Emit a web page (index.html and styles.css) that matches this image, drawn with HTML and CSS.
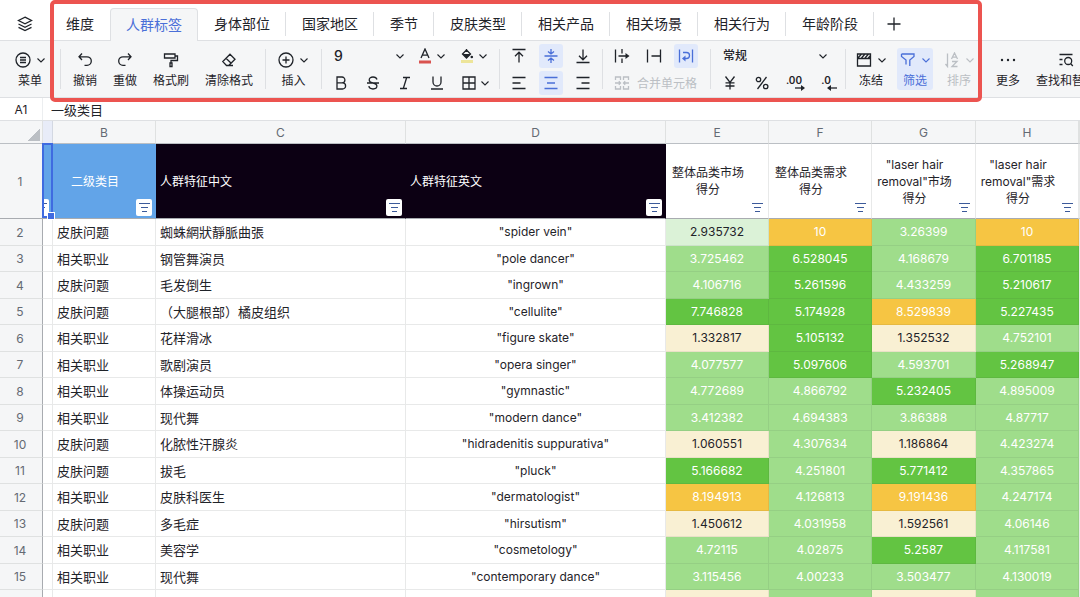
FILE: index.html
```html
<!DOCTYPE html>
<html lang="zh-CN">
<head>
<meta charset="UTF-8" />
<meta name="viewport" content="width=device-width, initial-scale=1.0"/>
<title>人群标签</title>
<link rel="stylesheet" href="styles.css">
</head>
<body>

<!-- 共用图标 -->
<svg class="symbols" aria-hidden="true">
    <symbol id="chevron" viewBox="0 0 10 10"><path d="M1.500 3.500L5 7l3.500-3.500"/></symbol>
    <symbol id="filter-lines" viewBox="0 0 16 17"><path d="M3 4.500h11M5 8.500h7M6 12.500h5"/></symbol>
</svg>

<!-- 工作表标签 -->
<nav class="tab-bar">
    <button class="sheet-list" aria-label="工作表列表">
        <svg class="icon" viewBox="0 0 16 16"><path d="M8 1.200l6.500 3.300L8 7.800 1.500 4.500z"/><path d="M1.500 8L8 11.300 14.500 8M1.500 11.300L8 14.600l6.500-3.300"/></svg>
    </button>
    <ul class="tabs">
        <li><button>维度</button></li>
        <li class="active"><button>人群标签</button></li>
        <li><button>身体部位</button></li>
        <li><button>国家地区</button></li>
        <li><button>季节</button></li>
        <li><button>皮肤类型</button></li>
        <li><button>相关产品</button></li>
        <li><button>相关场景</button></li>
        <li><button>相关行为</button></li>
        <li><button>年龄阶段</button></li>
    </ul>
    <button class="add-tab" aria-label="新建工作表">
        <svg class="icon" viewBox="0 0 16 16"><path d="M8 1.500v13M1.500 8h13"/></svg>
    </button>
</nav>

<!-- 工具栏 -->
<div class="toolbar">
    <div class="group center">
        <button class="tool drop">
            <span class="tool-icon">
                <svg class="icon" viewBox="0 0 16 16"><circle cx="8" cy="8" r="7"/><path d="M5 5.500h6M5 8h6M5 10.500h6"/></svg>
                <svg class="chevron"><use href="#chevron"/></svg>
            </span>
            <span>菜单</span>
        </button>
    </div>

    <div class="group center">
        <button class="tool">
            <span class="tool-icon"><svg class="icon" viewBox="0 0 16 16"><path d="M5 1.500L2 4.800 5 8M2 4.800h8a4.300 4.300 0 0 1 0 8.600H7.500"/></svg></span>
            <span>撤销</span>
        </button>
        <button class="tool">
            <span class="tool-icon"><svg class="icon" viewBox="0 0 16 16"><path d="M11 1.500l3 3.300L11 8M14 4.800H6a4.300 4.300 0 0 0 0 8.600h2.500"/></svg></span>
            <span>重做</span>
        </button>
        <button class="tool">
            <span class="tool-icon"><svg class="icon" viewBox="0 0 16 16"><path d="M1.500 2h10.500v4H1.500zM12 4h2.500v4.500H8v2.500M7 11h2v3.500H7z"/></svg></span>
            <span>格式刷</span>
        </button>
        <button class="tool">
            <span class="tool-icon"><svg class="icon" viewBox="0 0 16 16"><path d="M9 2.200l5 5-6.300 6.300H5.500L1.800 9.600zM5 6.200l5.200 5M5.500 13.500H12"/></svg></span>
            <span>清除格式</span>
        </button>
    </div>

    <div class="group center">
        <button class="tool drop">
            <span class="tool-icon">
                <svg class="icon" viewBox="0 0 16 16"><circle cx="8" cy="8" r="7"/><path d="M8 4.500v7M4.500 8h7"/></svg>
                <svg class="chevron"><use href="#chevron"/></svg>
            </span>
            <span>插入</span>
        </button>
    </div>

    <div class="group stack">
        <div class="row">
            <label class="picker size-picker">
                <select aria-label="字号"><option>9</option></select>
                <svg class="chevron"><use href="#chevron"/></svg>
            </label>
            <button class="cell-drop" aria-label="字体颜色">
                <svg class="icon" viewBox="0 0 16 16"><path d="M4 10L8 1l4 9M5.300 7.200h5.400"/><path class="red-bar" d="M2 14h12"/></svg>
                <svg class="chevron"><use href="#chevron"/></svg>
            </button>
            <button class="cell-drop" aria-label="填充颜色">
                <svg class="icon" viewBox="0 0 16 16"><path d="M7.500 1v3M7.500 2l4 4-4 4-4-4z"/><path class="solid" d="M3.500 6h8l-4 4z"/><circle class="solid" cx="12.800" cy="9" r="1.300"/><path class="yellow-bar" d="M2 13.500h12"/></svg>
                <svg class="chevron"><use href="#chevron"/></svg>
            </button>
        </div>
        <div class="row">
            <button class="cell" aria-label="加粗"><svg class="icon" viewBox="0 0 16 16"><path d="M4 2h5a2.900 2.900 0 0 1 0 5.800H4zM4 7.800h5.500a3.100 3.100 0 0 1 0 6.200H4z"/></svg></button>
            <button class="cell" aria-label="删除线"><svg class="icon" viewBox="0 0 16 16"><path d="M12 4.500C11.500 2.800 10 2 8 2 5.800 2 4.200 3 4.200 4.900 4.200 6.800 6 7.500 8 8c2.300.600 3.900 1.300 3.900 3.100S10.200 14 8 14c-2.300 0-3.800-1-4.200-2.800M2 8h12"/></svg></button>
            <button class="cell" aria-label="斜体"><svg class="icon" viewBox="0 0 16 16"><path d="M6 2.500h7M3 13.500h7M9.700 2.500l-3.400 11"/></svg></button>
            <button class="cell" aria-label="下划线"><svg class="icon" viewBox="0 0 16 16"><path d="M4 1.500v5.500a4 4 0 0 0 8 0V1.500M2 14h12"/></svg></button>
            <button class="cell-drop" aria-label="边框">
                <svg class="icon" viewBox="0 0 16 16"><path d="M2 2h12v12H2zM8 2v12M2 8h12"/></svg>
                <svg class="chevron"><use href="#chevron"/></svg>
            </button>
        </div>
    </div>

    <div class="group stack">
        <div class="row">
            <button class="cell" aria-label="顶部对齐"><svg class="icon" viewBox="0 0 16 16"><path d="M1.500 1.500h13M8 14.500V4.500M4 8.200l4-4 4 4"/></svg></button>
            <button class="cell on" aria-label="垂直居中"><svg class="icon" viewBox="0 0 16 16"><path d="M1.500 8h13M8 1v4.500M5 3.500l3 2.500 3-2.500M8 15v-4.500M5 12.500L8 10l3 2.500"/></svg></button>
            <button class="cell" aria-label="底部对齐"><svg class="icon" viewBox="0 0 16 16"><path d="M1.500 14.500h13M8 1.500v10M4 7.800l4 4 4-4"/></svg></button>
        </div>
        <div class="row">
            <button class="cell" aria-label="左对齐"><svg class="icon" viewBox="0 0 16 16"><path d="M1.500 2.500h13M1.500 8h8M1.500 13.500h13"/></svg></button>
            <button class="cell on" aria-label="水平居中"><svg class="icon" viewBox="0 0 16 16"><path d="M1.500 2.500h13M4 8h8M1.500 13.500h13"/></svg></button>
            <button class="cell" aria-label="右对齐"><svg class="icon" viewBox="0 0 16 16"><path d="M1.500 2.500h13M6.500 8h8M1.500 13.500h13"/></svg></button>
        </div>
    </div>

    <div class="group stack">
        <div class="row">
            <button class="cell" aria-label="溢出"><svg class="icon" viewBox="0 0 16 16"><path d="M1.500 1.500v13M8 1v4.500M8 10.500V15M4.500 8H13"/><path class="solid" d="M11.500 5L15.500 8l-4 3z"/></svg></button>
            <button class="cell" aria-label="截断"><svg class="icon" viewBox="0 0 16 16"><path d="M1.500 1.500v13M14.500 1.500v13M5.500 8h9"/></svg></button>
            <button class="cell on" aria-label="自动换行"><svg class="icon" viewBox="0 0 16 16"><path d="M1.500 1.500v13M14.500 1.500v13M5 4.500h3.500a3 3 0 0 1 0 6H6"/><path class="solid" d="M7.500 7.500v6L4 10.500z"/></svg></button>
        </div>
        <div class="row">
            <button class="merge" disabled>
                <svg class="icon" viewBox="0 0 16 16"><path d="M6.500 5V2h-5v3M1.500 11v3h5v-3M14.500 5V2h-5v3M9.500 11v3h5v-3M1 8h5.500M9.500 8H15M4.800 6.200L6.500 8 4.800 9.800M11.200 6.200L9.500 8l1.700 1.800"/></svg>
                <span>合并单元格</span>
            </button>
        </div>
    </div>

    <div class="group stack">
        <div class="row">
            <label class="picker format-picker">
                <select aria-label="数字格式"><option>常规</option></select>
                <svg class="chevron"><use href="#chevron"/></svg>
            </label>
        </div>
        <div class="row">
            <button class="cell" aria-label="货币"><svg class="icon" viewBox="0 0 16 16"><path d="M3.500 1.500L8 7.500l4.500-6M8 7.500v7M3.500 7.800h9M3.500 11h9"/></svg></button>
            <button class="cell" aria-label="百分比"><svg class="icon" viewBox="0 0 16 16"><path d="M12.500 2l-9 12"/><circle cx="4.500" cy="4.500" r="2.200"/><circle cx="11.700" cy="11.500" r="2.200"/></svg></button>
            <button class="cell decimals" aria-label="增加小数位">
                <span>.00</span>
                <svg viewBox="0 0 12 6"><path d="M1 3h7"/><path class="solid" d="M7 0l4 3-4 3z"/></svg>
            </button>
            <button class="cell decimals" aria-label="减少小数位">
                <span>.0</span>
                <svg viewBox="0 0 12 6"><path d="M4 3h7"/><path class="solid" d="M5 0L1 3l4 3z"/></svg>
            </button>
        </div>
    </div>

    <div class="group last">
        <button class="tool drop">
            <span class="tool-icon">
                <svg class="icon" viewBox="0 0 16 16"><path d="M1.500 2h13v12h-13zM1.500 6.500h13M2 6l3.500-4M5.500 6L9 2M9 6l3.500-4M12 6.500l2.500-3"/></svg>
                <svg class="chevron"><use href="#chevron"/></svg>
            </span>
            <span>冻结</span>
        </button>
        <button class="tool drop on">
            <span class="tool-icon">
                <svg class="icon" viewBox="0 0 16 16"><path d="M1.500 2h12.500v2.500L9.800 8v6M1.500 2v2.500L6 8v4.500"/></svg>
                <svg class="chevron"><use href="#chevron"/></svg>
            </span>
            <span>筛选</span>
        </button>
        <button class="tool drop" disabled>
            <span class="tool-icon">
                <svg class="icon" viewBox="0 0 16 16"><path d="M3.500 1.500v13L1.500 12M7.500 7l3-6 3 6M8.500 5.200h4M8 9.500h5l-5 5h5.500"/></svg>
                <svg class="chevron"><use href="#chevron"/></svg>
            </span>
            <span>排序</span>
        </button>
        <div class="extra">
            <button class="tool">
                <span class="tool-icon"><svg class="icon" viewBox="0 0 16 16"><circle class="dot" cx="2" cy="8" r="1.200"/><circle class="dot" cx="8" cy="8" r="1.200"/><circle class="dot" cx="14" cy="8" r="1.200"/></svg></span>
                <span>更多</span>
            </button>
            <button class="tool">
                <span class="tool-icon"><svg class="icon" viewBox="0 0 16 16"><path d="M1.500 2.500h13M1.500 7.500h3M1.500 12.500h3M12.800 11.800l2 2.200"/><circle cx="10.200" cy="9" r="3.500"/></svg></span>
                <span>查找和替换</span>
            </button>
        </div>
    </div>
</div>

<!-- 编辑栏 -->
<div class="formula-bar">
    <input class="cell-name" aria-label="单元格" value="A1">
    <input class="formula" aria-label="内容" value="一级类目">
</div>

<!-- 表格 -->
<main class="sheet">
<table>
    <colgroup>
        <col class="w-index"><col class="w-a"><col class="w-score"><col class="w-c"><col class="w-d"><col class="w-score"><col class="w-score"><col class="w-g"><col class="w-score"><col>
    </colgroup>
    <thead>
        <tr class="letters">
            <th class="corner"></th><th class="picked"></th><th>B</th><th>C</th><th>D</th><th>E</th><th>F</th><th>G</th><th>H</th><th></th>
        </tr>
        <tr class="titles">
            <th class="index picked">1</th>
            <th class="blue"><span class="clip"><button class="filter" aria-label="筛选 A"><svg><use href="#filter-lines"/></svg></button></span><span class="selection"></span></th>
            <th class="blue">二级类目<button class="filter" aria-label="筛选 B"><svg><use href="#filter-lines"/></svg></button></th>
            <th class="black">人群特征中文<button class="filter" aria-label="筛选 C"><svg><use href="#filter-lines"/></svg></button></th>
            <th class="black">人群特征英文<button class="filter" aria-label="筛选 D"><svg><use href="#filter-lines"/></svg></button></th>
            <th>整体品类市场得分<button class="filter" aria-label="筛选 E"><svg><use href="#filter-lines"/></svg></button></th>
            <th>整体品类需求得分<button class="filter" aria-label="筛选 F"><svg><use href="#filter-lines"/></svg></button></th>
            <th>"laser hair removal"市场得分<button class="filter" aria-label="筛选 G"><svg><use href="#filter-lines"/></svg></button></th>
            <th>"laser hair removal"需求得分<button class="filter" aria-label="筛选 H"><svg><use href="#filter-lines"/></svg></button></th>
            <th></th>
        </tr>
    </thead>
    <tbody>
        <tr><th class="index">2</th><td></td><td>皮肤问题</td><td>蜘蛛網狀靜脈曲張</td><td class="en">"spider vein"</td><td class="pale">2.935732</td><td class="orange">10</td><td class="light">3.26399</td><td class="orange">10</td><td></td></tr>
        <tr><th class="index">3</th><td></td><td>相关职业</td><td>钢管舞演员</td><td class="en">"pole dancer"</td><td class="light">3.725462</td><td class="green">6.528045</td><td class="light">4.168679</td><td class="green">6.701185</td><td></td></tr>
        <tr><th class="index">4</th><td></td><td>皮肤问题</td><td>毛发倒生</td><td class="en">"ingrown"</td><td class="light">4.106716</td><td class="green">5.261596</td><td class="light">4.433259</td><td class="green">5.210617</td><td></td></tr>
        <tr><th class="index">5</th><td></td><td>皮肤问题</td><td>（大腿根部）橘皮组织</td><td class="en">"cellulite"</td><td class="green">7.746828</td><td class="green">5.174928</td><td class="orange">8.529839</td><td class="green">5.227435</td><td></td></tr>
        <tr><th class="index">6</th><td></td><td>相关职业</td><td>花样滑冰</td><td class="en">"figure skate"</td><td class="cream">1.332817</td><td class="green">5.105132</td><td class="cream">1.352532</td><td class="light">4.752101</td><td></td></tr>
        <tr><th class="index">7</th><td></td><td>相关职业</td><td>歌剧演员</td><td class="en">"opera singer"</td><td class="light">4.077577</td><td class="green">5.097606</td><td class="light">4.593701</td><td class="green">5.268947</td><td></td></tr>
        <tr><th class="index">8</th><td></td><td>相关职业</td><td>体操运动员</td><td class="en">"gymnastic"</td><td class="light">4.772689</td><td class="light">4.866792</td><td class="green">5.232405</td><td class="light">4.895009</td><td></td></tr>
        <tr><th class="index">9</th><td></td><td>相关职业</td><td>现代舞</td><td class="en">"modern dance"</td><td class="light">3.412382</td><td class="light">4.694383</td><td class="light">3.86388</td><td class="light">4.87717</td><td></td></tr>
        <tr><th class="index">10</th><td></td><td>皮肤问题</td><td>化脓性汗腺炎</td><td class="en">"hidradenitis suppurativa"</td><td class="cream">1.060551</td><td class="light">4.307634</td><td class="cream">1.186864</td><td class="light">4.423274</td><td></td></tr>
        <tr><th class="index">11</th><td></td><td>皮肤问题</td><td>拔毛</td><td class="en">"pluck"</td><td class="green">5.166682</td><td class="light">4.251801</td><td class="green">5.771412</td><td class="light">4.357865</td><td></td></tr>
        <tr><th class="index">12</th><td></td><td>相关职业</td><td>皮肤科医生</td><td class="en">"dermatologist"</td><td class="orange">8.194913</td><td class="light">4.126813</td><td class="orange">9.191436</td><td class="light">4.247174</td><td></td></tr>
        <tr><th class="index">13</th><td></td><td>皮肤问题</td><td>多毛症</td><td class="en">"hirsutism"</td><td class="cream">1.450612</td><td class="light">4.031958</td><td class="cream">1.592561</td><td class="light">4.06146</td><td></td></tr>
        <tr><th class="index">14</th><td></td><td>相关职业</td><td>美容学</td><td class="en">"cosmetology"</td><td class="light">4.72115</td><td class="light">4.02875</td><td class="green">5.2587</td><td class="light">4.117581</td><td></td></tr>
        <tr><th class="index">15</th><td></td><td>相关职业</td><td>现代舞</td><td class="en">"contemporary dance"</td><td class="light">3.115456</td><td class="light">4.00233</td><td class="light">3.503477</td><td class="light">4.130019</td><td></td></tr>
        <tr><th class="index"></th><td></td><td></td><td></td><td></td><td class="cream"></td><td class="light"></td><td class="cream"></td><td class="light"></td><td></td></tr>
    </tbody>
</table>
</main>

<!-- 红色标注框 -->
<div class="callout"></div>

</body>
</html>
```
FILE: styles.css
```css
* {
    box-sizing: border-box;
}

body {
    margin: 0;
    height: 100vh;
    display: flex;
    flex-direction: column;
    position: relative;
    overflow: hidden;
    font-family: Inter, "Noto Sans CJK SC", sans-serif;
    font-size: 12px;
    color: #1f2329;
    background: #fff;
}

button,
input,
select {
    font: inherit;
    color: inherit;
    background: none;
    border: 0;
    border-radius: 0;
    padding: 0;
    margin: 0;
}

svg {
    display: block;
    fill: none;
    stroke: currentColor;
    stroke-width: 1.3;
}

.symbols {
    position: absolute;
    width: 0;
    height: 0;
}

.icon {
    width: 16px;
    height: 16px;
    flex: none;
}

.chevron {
    width: 10px;
    height: 10px;
    flex: none;
    stroke-width: 1.1;
}

.solid,
.dot {
    fill: currentColor;
    stroke: none;
}

.red-bar {
    stroke: #d9534f;
    stroke-width: 3;
}

.yellow-bar {
    stroke: #ede59a;
    stroke-width: 3;
}

/* 工作表标签 */
.tab-bar {
    flex: none;
    display: flex;
    height: 41px;
    padding-top: 8px;
    border-bottom: 1px solid #dee0e3;
}

.sheet-list {
    width: 50px;
    display: flex;
    align-items: center;
    justify-content: center;
}

.tabs {
    display: flex;
    align-items: center;
    list-style: none;
    margin: 0;
    padding: 0;
    font-size: 14px;
}

.tabs li {
    height: 24px;
    border-right: 1px solid #dee0e3;
}

.tabs li:first-child {
    border-right-color: transparent;
}

.tabs button {
    height: 100%;
    padding: 0 15px 2px 16px;
    white-space: nowrap;
}

.tabs .active {
    height: 33px;
    align-self: flex-start;
    border: 1px solid #dee0e3;
    border-bottom: 0;
    border-radius: 4px 4px 0 0;
    background: #f5f6f7;
    color: #4a6fd8;
}

.tabs .active button {
    padding: 0 15px 2px;
}

.add-tab {
    width: 40px;
    display: flex;
    align-items: center;
    justify-content: center;
}

/* 工具栏 */
.toolbar {
    flex: none;
    display: grid;
    grid-template-columns: 61px 205px 56px 178px 103px 108px 135px 1fr;
    align-items: center;
    height: 57px;
    background: #f5f6f7;
    border-bottom: 1px solid #dee0e3;
    overflow: hidden;
}

.group {
    display: flex;
    align-items: center;
    min-width: 0;
    height: 40px;
    border-right: 1px solid #dee0e3;
}

.center {
    justify-content: center;
}

.stack {
    flex-direction: column;
    align-items: stretch;
    justify-content: center;
    gap: 3px;
    padding-left: 7px;
}

.last {
    gap: 8px;
    padding-left: 7px;
    border-right: 0;
}

.extra {
    display: flex;
    margin-left: 3px;
}

.tool {
    flex: none;
    display: flex;
    flex-direction: column;
    align-items: center;
    padding: 0 8px;
    line-height: 18px;
    white-space: nowrap;
}

.drop {
    width: 36px;
    padding: 0;
}

.tool-icon {
    display: flex;
    align-items: center;
    justify-content: center;
    gap: 5px;
    height: 24px;
}

.on {
    background: #e1e9fb;
    color: #4a6fd8;
    border-radius: 3px;
}

button:disabled {
    color: #bbbfc4;
}

.row {
    display: flex;
    gap: 8px;
}

.cell {
    display: flex;
    align-items: center;
    justify-content: center;
    width: 24px;
    height: 24px;
}

.cell-drop {
    display: flex;
    align-items: center;
    gap: 3px;
    height: 24px;
    padding: 0 1px 0 4px;
}

.picker {
    display: grid;
    align-items: center;
    height: 24px;
}

.picker select,
.picker .chevron {
    grid-area: 1 / 1;
}

.picker select {
    appearance: none;
    padding-left: 5px;
    font-weight: 500;
}

.picker .chevron {
    justify-self: end;
    margin-right: 2px;
    pointer-events: none;
}

.size-picker {
    width: 76px;
    font-size: 14px;
}

.size-picker .chevron {
    margin-right: 0;
}

.format-picker {
    width: 112px;
}

.decimals {
    flex-direction: column;
    font-size: 10px;
    font-weight: 600;
    line-height: 10px;
}

.decimals svg {
    width: 12px;
    height: 6px;
    align-self: flex-end;
}

.merge {
    display: flex;
    align-items: center;
    gap: 7px;
    height: 24px;
    padding-left: 4px;
    white-space: nowrap;
}

/* 编辑栏 */
.formula-bar {
    flex: none;
    display: flex;
    height: 23px;
    border-bottom: 1px solid #dee0e3;
}

.cell-name {
    width: 43px;
    text-align: center;
    border-right: 1px solid #eceef0;
}

.formula {
    flex: 1;
    padding-left: 8px;
    font-size: 13px;
}

/* 表格 */
.sheet {
    flex: 1;
    min-height: 0;
    overflow: hidden;
}

table {
    width: 100%;
    table-layout: fixed;
    border-collapse: separate;
    border-spacing: 0;
}

.w-index {
    width: 43px;
}

.w-a {
    width: 10px;
}

.w-score {
    width: 103px;
}

.w-c {
    width: 250px;
}

.w-d {
    width: 260px;
}

.w-g {
    width: 104px;
}

th,
td {
    padding: 0;
    font-weight: 400;
    border-right: 1px solid rgba(31, 35, 41, 0.1);
    border-bottom: 1px solid rgba(31, 35, 41, 0.1);
}

.letters th {
    height: 23px;
    background: #f5f6f7;
    color: #646a73;
    border-bottom-color: #bbbfc4;
}

.letters .corner {
    background: linear-gradient(135deg, transparent 50%, #bbbfc4 50%) 28px 8px / 12px 12px no-repeat #f5f6f7;
}

.letters .picked,
.titles .picked {
    background: #e8ecf8;
}

.index,
.titles .index {
    background: #f5f6f7;
    color: #646a73;
    border-right-color: #a8abb0;
    padding: 0 2px 0 0;
}

.titles th {
    position: relative;
    height: 75px;
    padding: 0 20px 0 2px;
    line-height: 17px;
    border-bottom-color: #a8abb0;
}

.titles .index {
    padding: 0 2px 0 0;
}

.titles .blue {
    background: #62a4e8;
    color: #fff;
    border-right-color: transparent;
}

.titles .black {
    padding-left: 4px;
    background: #0c0013;
    color: #fff;
    text-align: left;
    border-right-color: transparent;
}

.filter {
    position: absolute;
    right: 3px;
    bottom: 2px;
    width: 16px;
    height: 17px;
    background: #fff;
    border-radius: 2px;
    color: #3c5a9a;
}

.filter svg {
    width: 16px;
    height: 17px;
    stroke-width: 1;
}

/* A 列很窄，只露出按钮的一部分 */
.clip {
    position: absolute;
    inset: 0;
    overflow: hidden;
}

.selection {
    position: absolute;
    inset: -1px -1px 0 -1px;
    border: 2px solid #3f6be0;
}

.selection::after {
    content: "";
    position: absolute;
    right: -4px;
    bottom: -4px;
    width: 6px;
    height: 6px;
    background: #3f6be0;
    border: 1px solid #fff;
}

/* 选区手柄要盖住右侧单元格 */
.titles .blue:has(.selection) {
    z-index: 1;
}

tbody tr {
    height: 26px;
}

tbody tr:nth-child(odd) {
    height: 27px;
}

td {
    padding-left: 4px;
    font-size: 13px;
    line-height: 20px;
    white-space: nowrap;
}

.en,
.pale,
.light,
.green,
.orange,
.cream {
    padding: 0;
    font-size: 12px;
    text-align: center;
}

.pale,
.light,
.green,
.orange,
.cream {
    border-color: rgba(31, 35, 41, 0.07);
}

.pale {
    background: #dbf2d7;
}

.light {
    background: #9fdd8b;
    color: #fff;
}

.green {
    background: #63c442;
    color: #fff;
}

.orange {
    background: #f6c543;
    color: #fff;
}

.cream {
    background: #f9f0d3;
}

/* 红色标注框 */
.callout {
    position: absolute;
    top: 0;
    left: 50px;
    width: 932px;
    height: 102px;
    border: 4px solid #ec5450;
    border-radius: 5px;
    pointer-events: none;
}
```
